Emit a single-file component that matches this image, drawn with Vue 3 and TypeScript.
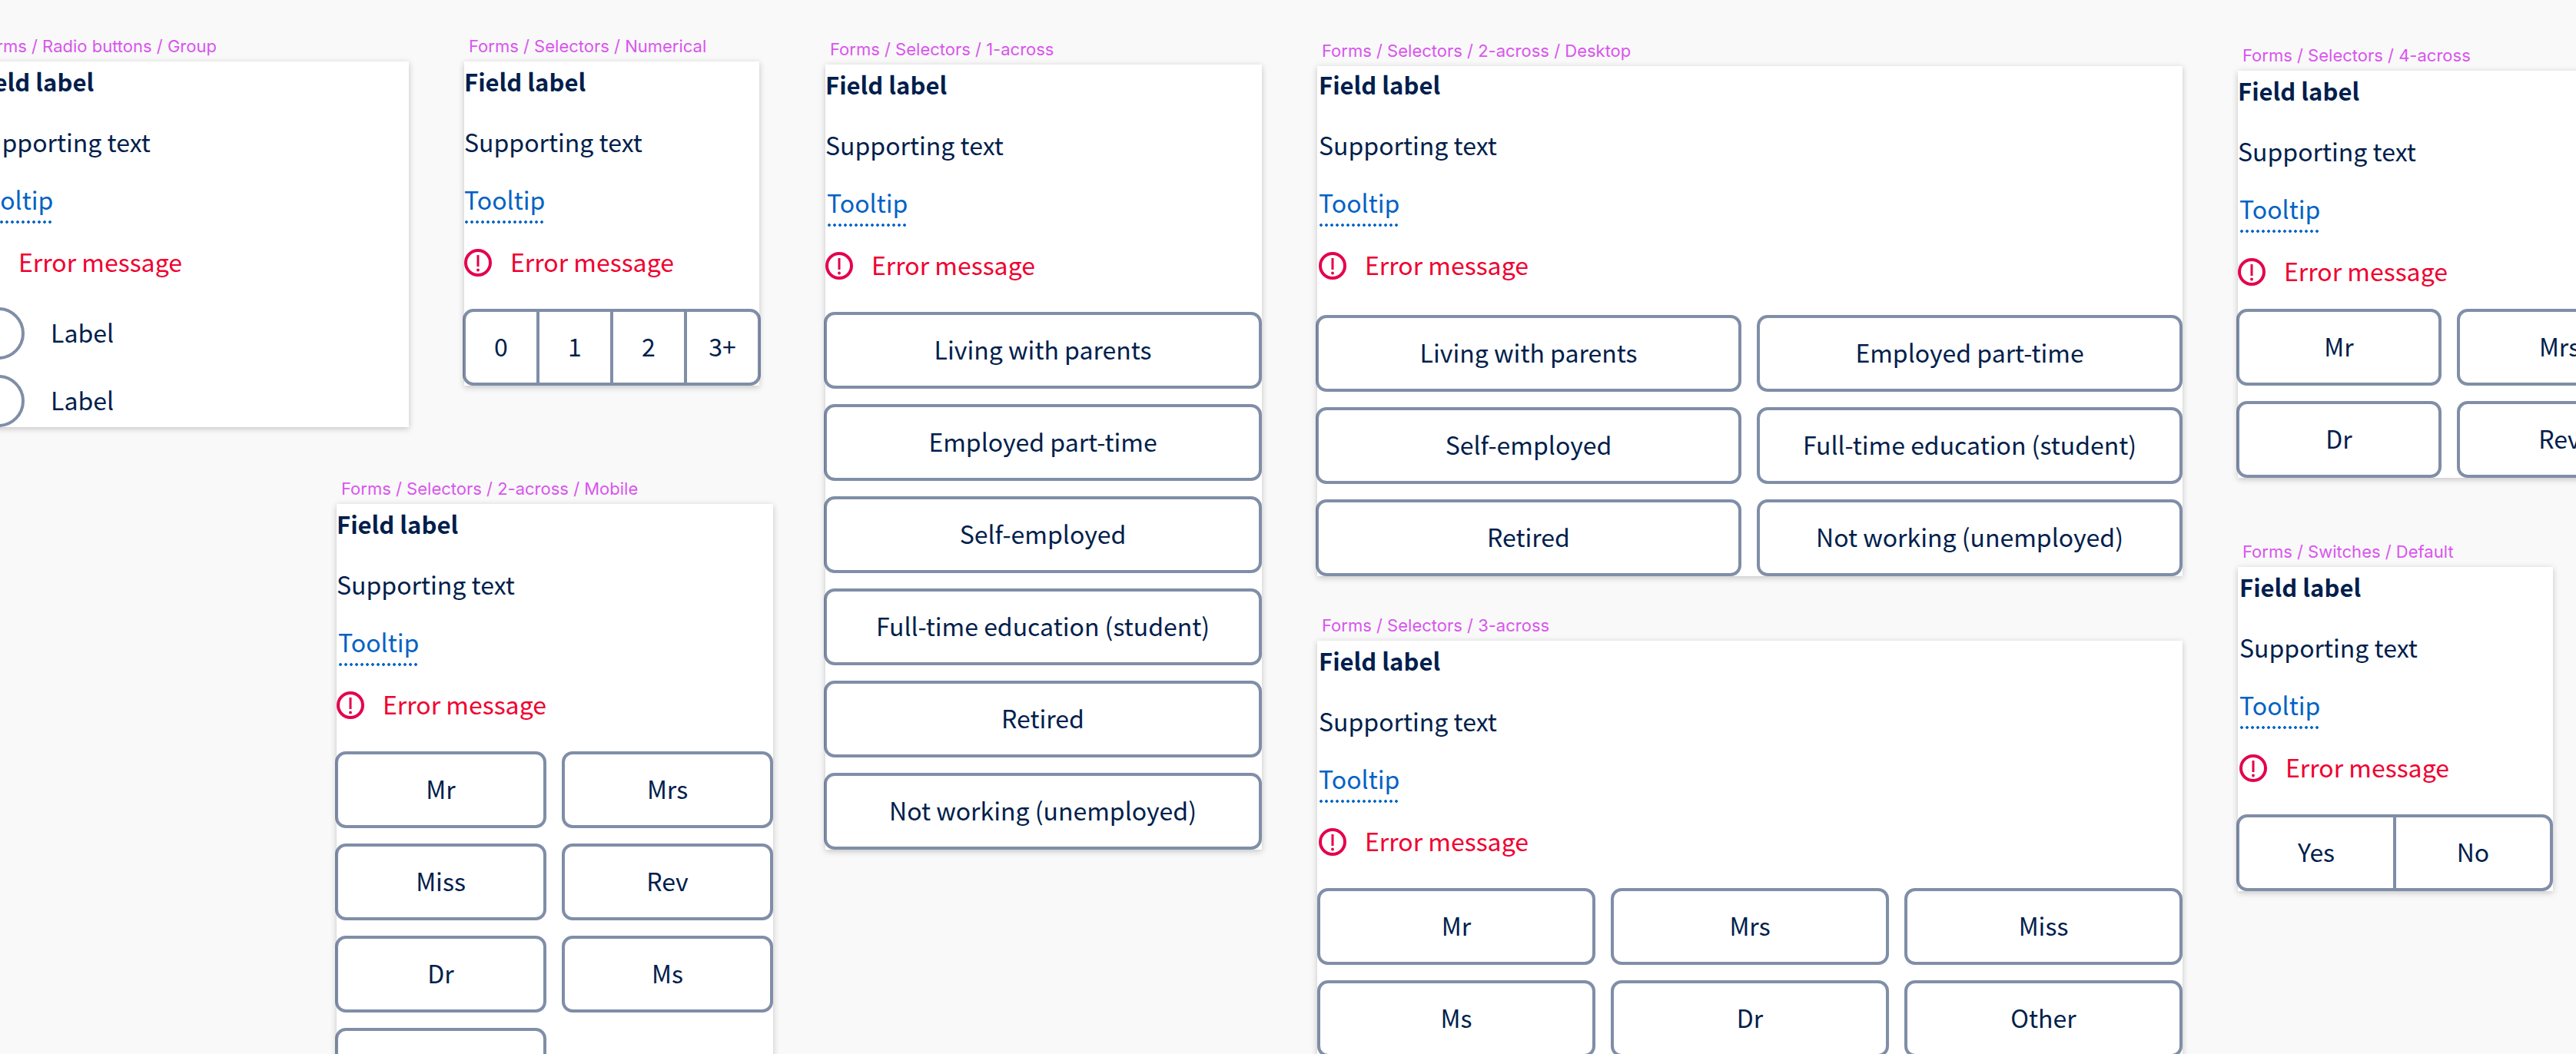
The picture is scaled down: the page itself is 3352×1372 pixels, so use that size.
<script setup lang="ts">
type Kind = 'radios' | 'segments' | 'buttons'

interface Frame {
  id: string
  title: string
  kind: Kind
  options: string[]
  across?: number
  variant?: string
}

interface Row {
  name: string
  frames: Frame[]
}

interface Column {
  name: string
  rows: Row[]
}

const employment = [
  'Living with parents',
  'Employed part-time',
  'Self-employed',
  'Full-time education (student)',
  'Retired',
  'Not working (unemployed)',
]

const columns: Column[] = [
  {
    name: 'first',
    rows: [
      {
        name: 'pair',
        frames: [
          { id: 'radio', title: 'Forms / Radio buttons / Group', kind: 'radios', options: ['Label', 'Label'] },
          { id: 'numerical', title: 'Forms / Selectors / Numerical', kind: 'segments', options: ['0', '1', '2', '3+'] },
        ],
      },
      {
        name: 'mobile',
        frames: [
          {
            id: 'two-mobile',
            title: 'Forms / Selectors / 2-across / Mobile',
            kind: 'buttons',
            across: 2,
            options: ['Mr', 'Mrs', 'Miss', 'Rev', 'Dr', 'Ms', 'Other'],
            variant: 'indented',
          },
        ],
      },
    ],
  },
  {
    name: 'second',
    rows: [
      {
        name: 'full',
        frames: [
          {
            id: 'one',
            title: 'Forms / Selectors / 1-across',
            kind: 'buttons',
            across: 1,
            options: employment,
            variant: 'indented',
          },
        ],
      },
    ],
  },
  {
    name: 'third',
    rows: [
      {
        name: 'full',
        frames: [
          {
            id: 'two-desktop',
            title: 'Forms / Selectors / 2-across / Desktop',
            kind: 'buttons',
            across: 2,
            options: employment,
            variant: 'inset raised',
          },
        ],
      },
      {
        name: 'full',
        frames: [
          {
            id: 'three',
            title: 'Forms / Selectors / 3-across',
            kind: 'buttons',
            across: 3,
            options: ['Mr', 'Mrs', 'Miss', 'Ms', 'Dr', 'Other'],
            variant: 'inset flush',
          },
        ],
      },
    ],
  },
  {
    name: 'fourth',
    rows: [
      {
        name: 'wide',
        frames: [
          {
            id: 'four',
            title: 'Forms / Selectors / 4-across',
            kind: 'buttons',
            across: 4,
            options: ['Mr', 'Mrs', 'Miss', 'Ms', 'Dr', 'Rev', 'Other'],
            variant: 'indented compact',
          },
        ],
      },
      {
        name: 'narrow',
        frames: [
          {
            id: 'switch',
            title: 'Forms / Switches / Default',
            kind: 'segments',
            options: ['Yes', 'No'],
            variant: 'inset switch',
          },
        ],
      },
    ],
  },
]
</script>

<template>
  <main class="board">
    <div v-for="column in columns" :key="column.name" class="column" :class="column.name">
      <div v-for="(row, r) in column.rows" :key="r" class="row" :class="row.name">
        <section v-for="frame in row.frames" :key="frame.id" class="artboard">
          <h2 class="caption">{{ frame.title }}</h2>
          <div class="frame" :class="frame.variant">
            <div class="header">
              <h3 :id="frame.id + '-label'" class="label">Field label</h3>
              <p class="support">Supporting text</p>
              <a class="tooltip" href="#">Tooltip</a>
              <p class="error">
                <svg class="error-icon" viewBox="0 0 36 36" aria-hidden="true">
                  <circle cx="18" cy="18" r="16" fill="none" stroke="currentColor" stroke-width="4" />
                  <path d="M18 8v15" stroke="currentColor" stroke-width="3" />
                  <circle cx="18" cy="27.5" r="1.9" fill="currentColor" />
                </svg>
                <span>Error message</span>
              </p>
            </div>

            <div v-if="frame.kind === 'radios'" class="radios" role="radiogroup" :aria-labelledby="frame.id + '-label'">
              <label v-for="(option, i) in frame.options" :key="i" class="radio">
                <input type="radio" :name="frame.id" :value="i" />
                <span>{{ option }}</span>
              </label>
            </div>

            <div v-else-if="frame.kind === 'segments'" class="segments" role="group" :aria-labelledby="frame.id + '-label'">
              <button v-for="option in frame.options" :key="option" type="button" class="segment">{{ option }}</button>
            </div>

            <div v-else class="options" :class="'across-' + frame.across" role="group" :aria-labelledby="frame.id + '-label'">
              <button v-for="option in frame.options" :key="option" type="button" class="option">{{ option }}</button>
            </div>
          </div>
        </section>
      </div>
    </div>
  </main>
</template>

<style>
body {
  margin: 0;
  background: #f9f9f9;
}
</style>

<style scoped>
.board {
  --ink: #001e4c;
  --line: rgba(1, 30, 80, 0.5);
  display: grid;
  grid-template-columns: minmax(0, 1002fr) minmax(0, 568fr) minmax(0, 1126fr) minmax(0, 440fr);
  column-gap: 72px;
  align-items: start;
  height: 100vh;
  overflow: hidden;
  background: #f9f9f9;
  color: var(--ink);
  font-family: "Noto Sans CJK SC", "Noto Sans", sans-serif;
  font-size: 32px;
  line-height: 40px;
}

.column {
  display: flex;
  flex-direction: column;
}
.first {
  padding-top: 46px;
  gap: 66px;
}
.second {
  padding-top: 50px;
}
.third {
  padding-top: 52px;
  gap: 52px;
}
.fourth {
  padding-top: 58px;
  gap: 84px;
}

.pair {
  display: grid;
  grid-template-columns: minmax(0, 568fr) minmax(0, 384fr);
  column-gap: 72px;
  align-items: start;
  margin: 0 14px 0 -36px;
}
.mobile {
  margin: 0 -4px 0 438px;
}
.wide {
  margin-right: -686px;
}
.narrow {
  margin-right: 30px;
}

.caption {
  margin: 0 0 6px;
  padding-left: 6px;
  color: #d955ee;
  font: 400 22px/28px Inter, "Liberation Sans", sans-serif;
  white-space: nowrap;
}

.frame {
  background: #fff;
  box-shadow: 0 2px 8px rgba(0, 0, 0, 0.22);
  padding-top: 6px;
}

.header {
  display: flex;
  flex-direction: column;
  align-items: flex-start;
  margin-bottom: 42px;
}
.inset .header {
  padding-left: 2px;
}
.raised {
  padding-top: 4px;
}
.raised .header {
  margin-bottom: 46px;
}
.compact .header {
  margin-bottom: 30px;
}

.label {
  margin: 0 0 38px;
  font-size: 31px;
  font-weight: 700;
}
.support {
  margin: 0 0 35px;
}
.tooltip {
  margin-bottom: 29px;
  color: #0062c4;
  text-decoration: none;
}
.indented .tooltip {
  margin-left: 2px;
}
.tooltip::after {
  content: "";
  display: block;
  height: 4px;
  margin: 8px 0 0 1px;
  background: radial-gradient(circle at 2px 2px, currentColor 1.5px, transparent 2.2px) 0 0 / 7px 4px repeat-x;
}
.error {
  display: flex;
  align-items: flex-end;
  gap: 24px;
  margin: 0;
  color: #f00030;
}
.error-icon {
  width: 36px;
  height: 36px;
  color: #e4004c;
}

.radios {
  display: grid;
  gap: 20px;
  margin-top: -2px;
}
.radio {
  display: flex;
  align-items: center;
  gap: 34px;
}
.radio input {
  appearance: none;
  box-sizing: border-box;
  width: 68px;
  height: 68px;
  margin: 0;
  border: 4px solid var(--line);
  border-radius: 50%;
}
.radio span {
  padding-bottom: 4px;
}

.segments,
.options {
  margin: 0 0 -2px -2px;
}
.flush .options {
  margin-left: 0;
}
.segments {
  display: flex;
  margin-right: -2px;
  border: 4px solid var(--line);
  border-radius: 14px;
}
.switch .segments {
  margin-right: 0;
}
.options {
  display: grid;
  gap: 20px;
}
.across-1 {
  grid-template-columns: minmax(0, 1fr);
}
.across-2 {
  grid-template-columns: repeat(2, minmax(0, 1fr));
}
.across-3 {
  grid-template-columns: repeat(3, minmax(0, 1fr));
}
.across-4 {
  grid-template-columns: repeat(4, minmax(0, 1fr));
}

.option,
.segment {
  box-sizing: border-box;
  margin: 0;
  padding: 0 0 4px;
  background: transparent;
  color: inherit;
  font: inherit;
  text-align: center;
}
.option {
  height: 100px;
  border: 4px solid var(--line);
  border-radius: 14px;
}
.segment {
  flex: 1 1 0;
  height: 92px;
  border: 0;
}
.segment + .segment {
  border-left: 4px solid var(--line);
}
</style>
